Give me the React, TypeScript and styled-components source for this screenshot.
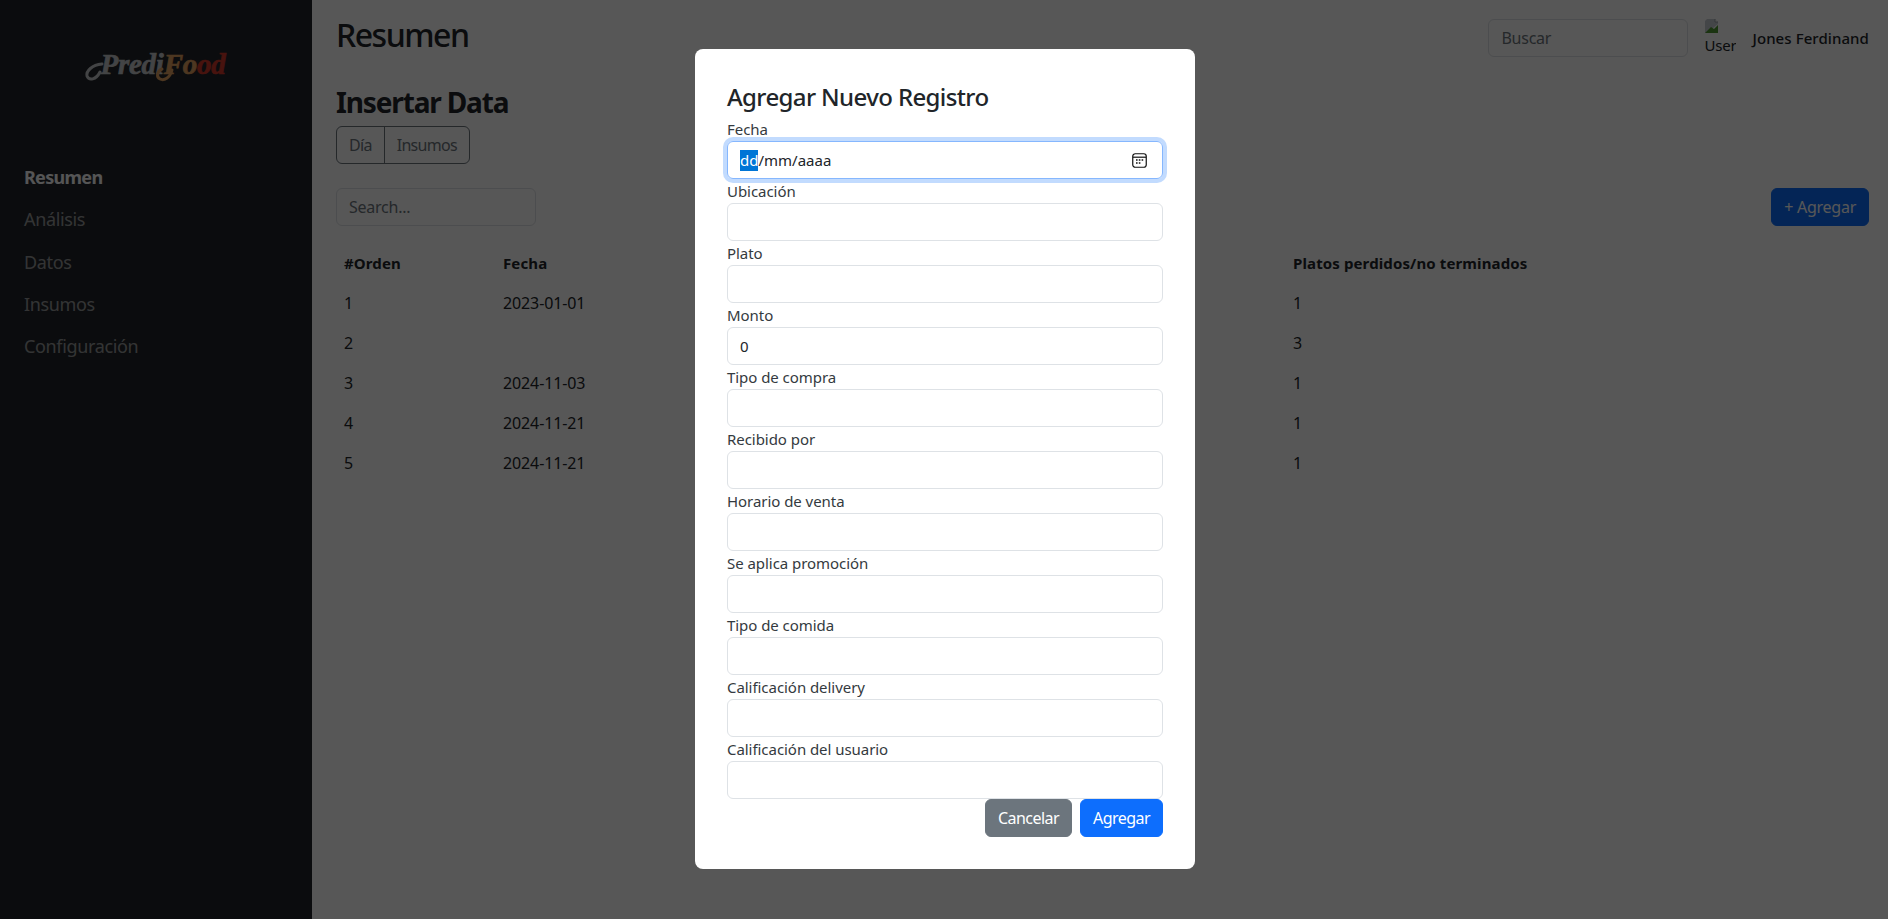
import React from 'react';
import styled, { createGlobalStyle } from 'styled-components';

const Global = createGlobalStyle`
  * { box-sizing: border-box; }
  html, body { margin: 0; height: 100%; }
  body {
    font-family: "Noto Sans", "Open Sans", sans-serif;
    font-size: 16px;
    letter-spacing: -0.25px;
    color: #212529;
    background: #fff;
    overflow: hidden;
  }
  input { font-family: inherit; letter-spacing: inherit; }
  input::placeholder { color: #6c757d; opacity: 1; }
`;

const Page = styled.div`
  display: flex;
  height: 100vh;
`;

const Sidebar = styled.aside`
  width: 312px;
  flex-shrink: 0;
  background: #212529;
  padding: 0 24px;
`;

const Logo = styled.div`
  display: flex;
  justify-content: center;
  align-items: flex-start;
  height: 156px;
  padding: 44px 0 0 14px;
`;

const LogoMark = styled.div`
  position: relative;
  font-family: "Liberation Serif", serif;
  font-size: 29px;
  font-style: italic;
  font-weight: 700;
  line-height: 40px;
  white-space: nowrap;
`;

const LogoPart = styled.span<{ $tone: string }>`
  color: ${({ $tone }) => $tone};
  -webkit-text-stroke: 0.7px ${({ $tone }) => $tone};
`;

const LogoSwash = styled.svg`
  position: absolute;
  left: -14px;
  top: 0;
  width: 150px;
  height: 42px;
  overflow: visible;
`;

const Nav = styled.nav`
  display: flex;
  flex-direction: column;
`;

const NavItem = styled.a<{ $active?: boolean }>`
  height: 42.3px;
  line-height: 42px;
  font-size: 18px;
  letter-spacing: ${({ $active }) => ($active ? '-0.7px' : '-0.35px')};
  color: ${({ $active }) => ($active ? '#f8f9fa' : 'rgba(255, 255, 255, 0.55)')};
  font-weight: ${({ $active }) => ($active ? 700 : 400)};
`;

const Main = styled.main`
  flex: 1;
  min-width: 0;
  padding: 16px 19px 0 24px;
`;

const TopBar = styled.header`
  display: flex;
  align-items: flex-start;
  justify-content: space-between;
  height: 70px;
`;

const PageTitle = styled.h2`
  margin: 0;
  font-size: 32px;
  font-weight: 500;
  line-height: 38px;
  letter-spacing: -1.5px;
`;

const UserArea = styled.div`
  display: flex;
  align-items: center;
  padding-top: 2px;
`;

const Control = styled.input<{ $width?: number }>`
  display: block;
  width: ${({ $width }) => ($width ? `${$width}px` : '100%')};
  height: 38px;
  padding: 6px 12px;
  font-size: ${({ $width }) => ($width ? '16px' : '15px')};
  color: #212529;
  background: #fff;
  border: 1px solid #dee2e6;
  border-radius: 6px;
  outline: none;
`;

const Avatar = styled.div`
  width: 32px;
  height: 40px;
  margin: 0 16px;
  overflow: hidden;
  font-size: 15px;
  line-height: 22px;
  letter-spacing: -0.2px;
`;

const BrokenIcon = styled.svg`
  display: block;
  width: 16px;
  height: 16px;
`;

const UserName = styled.span`
  font-size: 15px;
  font-weight: 500;
  white-space: nowrap;
  letter-spacing: 0.08px;
`;

const SectionTitle = styled.h3`
  margin: -1px 0 7px;
  font-size: 28px;
  font-weight: 700;
  line-height: 34px;
  letter-spacing: -1.15px;
`;

const ButtonGroup = styled.div`
  display: inline-flex;
  height: 38px;
  margin-bottom: 24px;
  border: 1px solid #6c757d;
  border-radius: 6px;
  vertical-align: top;
`;

const GroupButton = styled.div`
  display: flex;
  align-items: center;
  padding: 0 12px;
  color: #6c757d;
  letter-spacing: -0.7px;
  & + & { border-left: 1px solid #6c757d; }
`;

const Toolbar = styled.div`
  display: flex;
  justify-content: space-between;
  margin-bottom: 16.5px;
`;

const Button = styled.button<{ $variant: 'primary' | 'secondary' }>`
  height: 38px;
  padding: 0 12px;
  font-family: inherit;
  font-size: 16px;
  letter-spacing: inherit;
  color: #fff;
  background: ${({ $variant }) => ($variant === 'primary' ? '#0d6efd' : '#6c757d')};
  border: 1px solid ${({ $variant }) => ($variant === 'primary' ? '#0d6efd' : '#6c757d')};
  border-radius: 6px;
`;

const Table = styled.table`
  width: 100%;
  table-layout: fixed;
  border-collapse: collapse;
`;

const HeadCell = styled.th<{ $width?: number }>`
  width: ${({ $width }) => ($width ? `${$width}px` : 'auto')};
  height: 40px;
  padding: 0 8px;
  text-align: left;
  font-weight: 700;
  font-size: 15px;
  letter-spacing: 0.12px;
`;

const Cell = styled.td`
  height: 40px;
  padding: 0 8px;
  letter-spacing: -0.12px;
`;

const Backdrop = styled.div`
  position: fixed;
  inset: 0;
  display: flex;
  align-items: center;
  justify-content: center;
  padding-left: 2px;
  background: rgba(0, 0, 0, 0.66);
`;

const Modal = styled.form`
  width: 500px;
  margin-bottom: 1px;
  padding: 32px;
  background: #fff;
  border-radius: 8px;
`;

const ModalTitle = styled.h4`
  margin: 0 0 6px;
  padding-top: 2px;
  font-size: 24px;
  font-weight: 500;
  line-height: 28.8px;
  letter-spacing: -0.62px;
`;

const Label = styled.label`
  display: block;
  height: 24px;
  line-height: 24px;
  font-size: 15px;
  letter-spacing: -0.05px;
  color: #343a40;
`;

const DateField = styled.div`
  display: flex;
  align-items: center;
  justify-content: space-between;
  height: 38px;
  padding: 0 15px 0 12px;
  border: 1px solid #86b7fe;
  border-radius: 6px;
  box-shadow: 0 0 0 4px rgba(13, 110, 253, 0.25);
  font-size: 15px;
  letter-spacing: 0;
`;

const DateSegment = styled.span`
  display: inline-block;
  height: 21px;
  line-height: 21px;
  color: #fff;
  background: #0075d6;
`;

const ModalActions = styled.div`
  display: flex;
  justify-content: flex-end;
  gap: 8px;
  ${Button} { letter-spacing: -0.55px; }
`;

const fields = [
  { label: 'Ubicación' },
  { label: 'Plato' },
  { label: 'Monto', value: '0' },
  { label: 'Tipo de compra' },
  { label: 'Recibido por' },
  { label: 'Horario de venta' },
  { label: 'Se aplica promoción' },
  { label: 'Tipo de comida' },
  { label: 'Calificación delivery' },
  { label: 'Calificación del usuario' },
];

const orders = [
  { id: 1, date: '2023-01-01', lost: 1 },
  { id: 2, date: '', lost: 3 },
  { id: 3, date: '2024-11-03', lost: 1 },
  { id: 4, date: '2024-11-21', lost: 1 },
  { id: 5, date: '2024-11-21', lost: 1 },
];

export default function App() {
  return (
    <>
      <Global />
      <Page>
        <Sidebar>
          <Logo>
            <LogoMark>
              <LogoPart $tone="#c4c6c9">Predi</LogoPart>
              <LogoPart $tone="#e0a060">Fo</LogoPart>
              <LogoPart $tone="#d23a2a">od</LogoPart>
              <LogoSwash viewBox="0 0 150 42" fill="none" strokeLinecap="round" strokeWidth="3">
                <path d="M14 28C10 36 3 37 1 32C0 27 6 21 16 20" stroke="#c4c6c9" />
                <path d="M86 26C84 34 78 37 74 35C70 33 71 27 76 25" stroke="#e0a060" />
              </LogoSwash>
            </LogoMark>
          </Logo>
          <Nav>
            <NavItem $active>Resumen</NavItem>
            <NavItem>Análisis</NavItem>
            <NavItem>Datos</NavItem>
            <NavItem>Insumos</NavItem>
            <NavItem>Configuración</NavItem>
          </Nav>
        </Sidebar>
        <Main>
          <TopBar>
            <PageTitle>Resumen</PageTitle>
            <UserArea>
              <Control $width={200} placeholder="Buscar" readOnly />
              <Avatar>
                <BrokenIcon viewBox="0 0 16 16">
                  <path d="M3 1h8l3 3v2L3 15H1V3z" fill="#c8ccd4" />
                  <path d="M1 15l6-6 3 2 4-4v8H1z" fill="#4f9a32" />
                  <path d="M11 1v3h3" fill="#fff" stroke="#9aa0a6" />
                </BrokenIcon>
                User
              </Avatar>
              <UserName>Jones Ferdinand</UserName>
            </UserArea>
          </TopBar>
          <SectionTitle>Insertar Data</SectionTitle>
          <ButtonGroup>
            <GroupButton>Día</GroupButton>
            <GroupButton>Insumos</GroupButton>
          </ButtonGroup>
          <Toolbar>
            <Control $width={200} placeholder="Search..." readOnly />
            <Button type="button" $variant="primary">+ Agregar</Button>
          </Toolbar>
          <Table>
            <thead>
              <tr>
                <HeadCell $width={159}>#Orden</HeadCell>
                <HeadCell $width={790}>Fecha</HeadCell>
                <HeadCell>Platos perdidos/no terminados</HeadCell>
              </tr>
            </thead>
            <tbody>
              {orders.map(order => (
                <tr key={order.id}>
                  <Cell>{order.id}</Cell>
                  <Cell>{order.date}</Cell>
                  <Cell>{order.lost}</Cell>
                </tr>
              ))}
            </tbody>
          </Table>
        </Main>
      </Page>
      <Backdrop>
        <Modal>
          <ModalTitle>Agregar Nuevo Registro</ModalTitle>
          <Label>Fecha</Label>
          <DateField>
            <span>
              <DateSegment>dd</DateSegment>/mm/aaaa
            </span>
            <svg width="15" height="15" viewBox="0 0 15 15" fill="none">
              <rect x="0.75" y="0.75" width="13.5" height="13.5" rx="2.5" stroke="#111" strokeWidth="1.2" />
              <path d="M1 4.2h13" stroke="#111" strokeWidth="1.2" />
              <path d="M4 7h1.6M6.8 7h1.6M9.6 7h1.6M4 10h1.6M6.8 10h1.6" stroke="#111" strokeWidth="1.5" />
            </svg>
          </DateField>
          {fields.map(field => (
            <div key={field.label}>
              <Label>{field.label}</Label>
              <Control defaultValue={field.value} readOnly />
            </div>
          ))}
          <ModalActions>
            <Button type="button" $variant="secondary">Cancelar</Button>
            <Button type="button" $variant="primary">Agregar</Button>
          </ModalActions>
        </Modal>
      </Backdrop>
    </>
  );
}
